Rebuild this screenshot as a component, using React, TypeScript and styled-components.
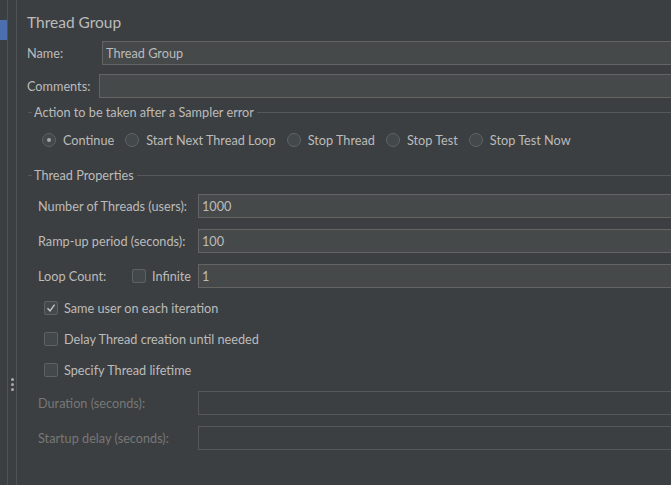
import React from 'react';
import styled, { createGlobalStyle } from 'styled-components';

const GlobalStyle = createGlobalStyle`
  html, body {
    margin: 0;
    padding: 0;
    background: #3c3f41;
  }
  body {
    font-family: Lato, "Noto Sans", sans-serif;
    font-size: 12.7px;
    color: #bbbbbb;
  }
`;

const radios = ['Continue', 'Start Next Thread Loop', 'Stop Thread', 'Stop Test', 'Stop Test Now'];

const App: React.FC = () => {
  return (
    <>
      <GlobalStyle />
      <Layout>
        <Sidebar>
          <Strip>
            <Marker />
          </Strip>
          <Strip $dots>
            <Grip>
              <Dot />
              <Dot />
              <Dot />
            </Grip>
          </Strip>
        </Sidebar>
        <Content>
          <Title>Thread Group</Title>
          <FieldRow $gap={0}>
            <Label $width={75}>Name:</Label>
            <Input defaultValue="Thread Group" />
          </FieldRow>
          <FieldRow $gap={9}>
            <Label $width={72}>Comments:</Label>
            <Input defaultValue="" />
          </FieldRow>

          <Group>
            <GroupTitle>Action to be taken after a Sampler error</GroupTitle>
            <RadioRow>
              {radios.map((name, index) => (
                <RadioItem key={`radio-${name}`}>
                  <Radio $checked={index === 0} />
                  {name}
                </RadioItem>
              ))}
            </RadioRow>
          </Group>

          <Group>
            <GroupTitle>Thread Properties</GroupTitle>
            <Props>
              <FieldRow $gap={0}>
                <Label $width={160}>Number of Threads (users):</Label>
                <Input defaultValue="1000" />
              </FieldRow>
              <FieldRow $gap={11}>
                <Label $width={160}>Ramp-up period (seconds):</Label>
                <Input defaultValue="100" />
              </FieldRow>
              <FieldRow $gap={11}>
                <Label $width={94}>Loop Count:</Label>
                <CheckItem $width={66}>
                  <Box />
                  Infinite
                </CheckItem>
                <Input defaultValue="1" />
              </FieldRow>
              <Checks>
                <CheckItem>
                  <Box $checked>
                    <svg width="10" height="10" viewBox="0 0 10 10">
                      <path d="M1.5 5.2 L4 7.8 L8.6 1.6" fill="none" stroke="#c4c4c4" strokeWidth="1.4" />
                    </svg>
                  </Box>
                  Same user on each iteration
                </CheckItem>
                <CheckItem>
                  <Box />
                  Delay Thread creation until needed
                </CheckItem>
                <CheckItem>
                  <Box />
                  Specify Thread lifetime
                </CheckItem>
              </Checks>
              <FieldRow $gap={11}>
                <Label $width={160} $disabled>Duration (seconds):</Label>
                <Input $disabled disabled />
              </FieldRow>
              <FieldRow $gap={11}>
                <Label $width={160} $disabled>Startup delay (seconds):</Label>
                <Input $disabled disabled />
              </FieldRow>
            </Props>
          </Group>
        </Content>
      </Layout>
    </>
  );
};

const Layout = styled.div`
  display: flex;
  height: 485px;
  overflow: hidden;
`;

const Sidebar = styled.div`
  display: flex;
  flex-shrink: 0;
`;

const Strip = styled.div<{ $dots?: boolean }>`
  width: ${({ $dots }) => ($dots ? 8 : 7)}px;
  border-right: 1px solid #4f5355;
  display: flex;
  flex-direction: column;
  align-items: center;
  padding-top: ${({ $dots }) => ($dots ? 378 : 20)}px;
`;

const Marker = styled.div`
  width: 7px;
  height: 20px;
  background: #4b6eaf;
`;

const Grip = styled.div`
  display: flex;
  flex-direction: column;
  gap: 2px;
  margin-left: 1px;
`;

const Dot = styled.div`
  width: 3px;
  height: 3px;
  border-radius: 50%;
  background: #a9a9a9;
`;

const Content = styled.div`
  flex: 1;
  padding-left: 10px;
  display: flex;
  flex-direction: column;
`;

const Title = styled.div`
  font-size: 15.5px;
  height: 20px;
  line-height: 20px;
  margin-top: 12px;
  margin-bottom: 9px;
`;

const FieldRow = styled.div<{ $gap: number }>`
  display: flex;
  align-items: center;
  height: 24px;
  margin-top: ${({ $gap }) => $gap}px;
`;

const Label = styled.div<{ $width: number; $disabled?: boolean }>`
  width: ${({ $width }) => $width}px;
  flex-shrink: 0;
  white-space: nowrap;
  color: ${({ $disabled }) => ($disabled ? '#777777' : '#bbbbbb')};
`;

const Input = styled.input<{ $disabled?: boolean }>`
  flex: 1;
  min-width: 0;
  height: 24px;
  box-sizing: border-box;
  margin: 0;
  padding: 0 3px;
  border: 1px solid ${({ $disabled }) => ($disabled ? '#555758' : '#646464')};
  border-right: none;
  background: ${({ $disabled }) => ($disabled ? '#3c3f41' : '#45494a')};
  color: #bbbbbb;
  font-family: Lato, "Noto Sans", sans-serif;
  font-size: 12.7px;
  outline: none;
`;

const Group = styled.div`
  display: flex;
  flex-direction: column;
  margin-left: 1px;
`;

const GroupTitle = styled.div`
  display: flex;
  align-items: center;
  height: 16px;
  margin-top: 6px;
  white-space: nowrap;

  &::before {
    content: '';
    width: 4px;
    margin-right: 2px;
    border-top: 1px solid #555758;
  }

  &::after {
    content: '';
    flex: 1;
    margin-left: 3px;
    border-top: 1px solid #555758;
  }
`;

const RadioRow = styled.div`
  display: flex;
  align-items: center;
  gap: 11px;
  height: 20px;
  margin-top: 10px;
  margin-left: 14px;
  margin-bottom: 11px;
`;

const RadioItem = styled.label`
  display: flex;
  align-items: center;
  gap: 7px;
  white-space: nowrap;
`;

const Radio = styled.span<{ $checked?: boolean }>`
  width: 14px;
  height: 14px;
  box-sizing: border-box;
  border-radius: 50%;
  border: 1px solid #5f6263;
  background: #43494a;
  display: flex;
  align-items: center;
  justify-content: center;

  &::after {
    content: '';
    display: ${({ $checked }) => ($checked ? 'block' : 'none')};
    width: 4px;
    height: 4px;
    border-radius: 50%;
    background: #a8a8a8;
  }
`;

const Props = styled.div`
  display: flex;
  flex-direction: column;
  margin-top: 11px;
  margin-left: 10px;
`;

const Checks = styled.div`
  display: flex;
  flex-direction: column;
  gap: 11px;
  margin-top: 10px;
  margin-left: 6px;
`;

const CheckItem = styled.label<{ $width?: number }>`
  display: flex;
  align-items: center;
  gap: 6px;
  height: 20px;
  white-space: nowrap;
  ${({ $width }) => $width && `width: ${$width}px; flex-shrink: 0;`}
`;

const Box = styled.span<{ $checked?: boolean }>`
  width: 14px;
  height: 14px;
  box-sizing: border-box;
  border-radius: 2px;
  border: 1px solid #5f6263;
  background: #43494a;
  display: flex;
  align-items: center;
  justify-content: center;
`;

export default App;
